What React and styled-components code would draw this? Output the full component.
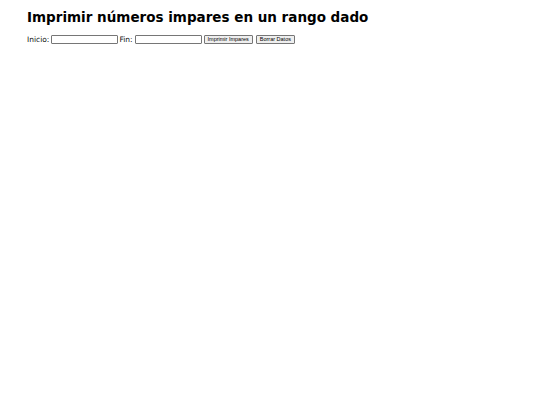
import React, { useState } from "react";
import styled, { createGlobalStyle } from "styled-components";

const Global = createGlobalStyle`
  html, body {
    margin: 0;
    padding: 0;
    background: #ffffff;
  }
`;

const Page = styled.div`
  padding: 9px 27px;
  font-family: "DejaVu Sans", Verdana, sans-serif;
  color: #000;
`;

const Title = styled.h1`
  margin: 0 0 10px 0;
  font-size: 13.5px;
  font-weight: 700;
  line-height: 16px;
`;

const Form = styled.div`
  display: flex;
  align-items: center;
  font-size: 7.5px;
  line-height: 9px;
`;

const Label = styled.label`
  margin-right: 2px;
  color: #111;
`;

const Field = styled.input`
  box-sizing: border-box;
  width: 67px;
  height: 9px;
  margin: 0 1px 0 0;
  padding: 0 2px;
  border: 1px solid #767676;
  border-radius: 1px;
  font-size: 7px;
  background: #fff;
  outline: none;
`;

const Button = styled.button`
  box-sizing: border-box;
  height: 9px;
  margin: 0 2px 0 1px;
  padding: 0 3px;
  border: 1px solid #767676;
  border-radius: 1px;
  background: #efefef;
  font-family: "Liberation Sans", Arial, sans-serif;
  font-size: 5.5px;
  line-height: 7px;
  color: #000;
`;

export default function App() {
  const [inicio, setInicio] = useState("");
  const [fin, setFin] = useState("");

  return (
    <>
      <Global />
      <Page>
        <Title>Imprimir números impares en un rango dado</Title>
        <Form>
          <Label>Inicio:</Label>
          <Field value={inicio} onChange={(e) => setInicio(e.target.value)} />
          <Label>Fin:</Label>
          <Field value={fin} onChange={(e) => setFin(e.target.value)} />
          <Button>Imprimir Impares</Button>
          <Button
            onClick={() => {
              setInicio("");
              setFin("");
            }}
          >
            Borrar Datos
          </Button>
        </Form>
      </Page>
    </>
  );
}
